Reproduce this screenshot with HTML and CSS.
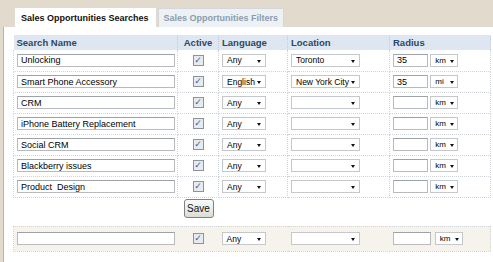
FILE: index.html
```html
<!DOCTYPE html>
<html lang="en">
  <head>
    <meta charset="UTF-8" />
    <title>Sales Opportunities</title>
    <link rel="stylesheet" href="styles.css">
  </head>
  <body>
    <div class="tabs">
      <div class="tab active">Sales Opportunities Searches</div>
      <div class="tab">Sales Opportunities Filters</div>
    </div>
    <div class="panel">
      <table class="searches">
        <colgroup>
          <col class="c-name" /><col class="c-active" /><col class="c-lang" /><col class="c-loc" /><col class="c-rad" />
        </colgroup>
        <thead>
          <tr>
            <th>Search Name</th>
            <th class="center">Active</th>
            <th>Language</th>
            <th>Location</th>
            <th>Radius</th>
          </tr>
        </thead>
        <tbody>
          <tr>
            <td><span class="field name">Unlocking</span></td>
            <td class="center"><span class="check">&#10003;</span></td>
            <td><span class="select lang"><span>Any</span><i class="arrow"></i></span></td>
            <td><span class="select loc"><span>Toronto</span><i class="arrow"></i></span></td>
            <td><span class="field rad">35</span> <span class="select unit"><span>km</span><i class="arrow"></i></span></td>
          </tr>
          <tr>
            <td><span class="field name">Smart Phone Accessory</span></td>
            <td class="center"><span class="check">&#10003;</span></td>
            <td><span class="select lang"><span>English</span><i class="arrow"></i></span></td>
            <td><span class="select loc"><span>New York City</span><i class="arrow"></i></span></td>
            <td><span class="field rad">35</span> <span class="select unit"><span>mi</span><i class="arrow"></i></span></td>
          </tr>
          <tr>
            <td><span class="field name">CRM</span></td>
            <td class="center"><span class="check">&#10003;</span></td>
            <td><span class="select lang"><span>Any</span><i class="arrow"></i></span></td>
            <td><span class="select loc"><span></span><i class="arrow"></i></span></td>
            <td><span class="field rad"></span> <span class="select unit"><span>km</span><i class="arrow"></i></span></td>
          </tr>
          <tr>
            <td><span class="field name">iPhone Battery Replacement</span></td>
            <td class="center"><span class="check">&#10003;</span></td>
            <td><span class="select lang"><span>Any</span><i class="arrow"></i></span></td>
            <td><span class="select loc"><span></span><i class="arrow"></i></span></td>
            <td><span class="field rad"></span> <span class="select unit"><span>km</span><i class="arrow"></i></span></td>
          </tr>
          <tr>
            <td><span class="field name">Social CRM</span></td>
            <td class="center"><span class="check">&#10003;</span></td>
            <td><span class="select lang"><span>Any</span><i class="arrow"></i></span></td>
            <td><span class="select loc"><span></span><i class="arrow"></i></span></td>
            <td><span class="field rad"></span> <span class="select unit"><span>km</span><i class="arrow"></i></span></td>
          </tr>
          <tr>
            <td><span class="field name">Blackberry issues</span></td>
            <td class="center"><span class="check">&#10003;</span></td>
            <td><span class="select lang"><span>Any</span><i class="arrow"></i></span></td>
            <td><span class="select loc"><span></span><i class="arrow"></i></span></td>
            <td><span class="field rad"></span> <span class="select unit"><span>km</span><i class="arrow"></i></span></td>
          </tr>
          <tr>
            <td><span class="field name">Product&nbsp; Design</span></td>
            <td class="center"><span class="check">&#10003;</span></td>
            <td><span class="select lang"><span>Any</span><i class="arrow"></i></span></td>
            <td><span class="select loc"><span></span><i class="arrow"></i></span></td>
            <td><span class="field rad"></span> <span class="select unit"><span>km</span><i class="arrow"></i></span></td>
          </tr>
          <tr class="save-row">
            <td></td>
            <td colspan="4"><button class="save">Save</button></td>
          </tr>
          <tr class="new-row">
            <td><span class="field name"></span></td>
            <td class="center"><span class="check">&#10003;</span></td>
            <td><span class="select lang"><span>Any</span><i class="arrow"></i></span></td>
            <td><span class="select loc"><span></span><i class="arrow"></i></span></td>
            <td><span class="field rad wide"></span> <span class="select unit"><span>km</span><i class="arrow"></i></span></td>
          </tr>
        </tbody>
      </table>
    </div>
  </body>
</html>
```

FILE: styles.css
```css
* {
  margin: 0;
  padding: 0;
  box-sizing: border-box;
}
body {
  background: #e1dacd;
  font-family: "Liberation Sans", Arial, sans-serif;
  height: 262px;
  overflow: hidden;
}
.tabs {
  display: flex;
  gap: 2px;
  padding: 8px 0 0 15px;
  height: 27px;
}
.tab {
  height: 19px;
  padding: 4px 5px 0 5px;
  font-size: 9px;
  font-weight: bold;
  color: #8a9bb0;
  background: #eef1f4;
  border: 1px solid #d3d6da;
  border-bottom: 0;
  white-space: nowrap;
}
.tab.active {
  height: 20px;
  padding-right: 6px;
  color: #111;
  background: #fff;
  border-color: #fff;
}
.panel {
  margin-left: 3px;
  height: 235px;
  background: #fff;
  border-left: 1px solid #b9b2a5;
  padding: 8px 0 0 9px;
}
.searches {
  width: 477px;
  border-collapse: collapse;
  table-layout: fixed;
}
.c-name { width: 164px; }
.c-active { width: 41px; }
.c-lang { width: 69px; }
.c-loc { width: 102px; }
.c-rad { width: 101px; }
.searches th {
  height: 15px;
  background: #dee7f1;
  color: #2c4866;
  font-size: 9.5px;
  text-align: left;
  padding: 0 3px;
  border-right: 1px dotted #c2cedb;
}
.searches td {
  height: 21px;
  padding: 0 3px;
  font-size: 8px;
  border: 1px dotted #cfd4da;
  border-top: 0;
  vertical-align: middle;
  white-space: nowrap;
}
.searches th.center,
.searches td.center {
  text-align: center;
}
.field,
.select {
  display: inline-flex;
  align-items: center;
  height: 13px;
  vertical-align: middle;
  font-size: 9px;
  color: #000;
  background: #fff;
  border: 1px solid #b7bbc0;
  border-top-color: #9da2a8;
  padding: 0 3px;
  overflow: hidden;
}
.field.name { width: 158px; }
.field.rad { width: 35px; }
.field.rad.wide { width: 38px; }
.select {
  justify-content: space-between;
  font-size: 8.5px;
  padding: 0 4px 0 4px;
  border-color: #c4c7cb;
}
.select.lang { width: 44px; }
.select.loc { width: 69px; }
.select.unit { width: 28px; padding: 0 3px 0 4px; font-size: 8px; }
.arrow {
  display: block;
  flex: none;
  width: 0;
  height: 0;
  border-left: 2.5px solid transparent;
  border-right: 2.5px solid transparent;
  border-top: 3px solid #111;
  margin-top: 2px;
}
.check {
  display: inline-block;
  width: 11px;
  height: 11px;
  border: 1px solid #8e9399;
  background: #e9eaec;
  color: #3a5fb0;
  font-family: "DejaVu Sans", sans-serif;
  font-size: 9px;
  line-height: 9px;
  text-align: center;
  vertical-align: middle;
  font-weight: bold;
}
.save-row td {
  height: 29px;
  border-left: 0;
  border-right: 0;
  vertical-align: top;
  padding: 1px 0 0 6px;
}
.save-row td:first-child {
  padding: 0;
}
.save {
  display: block;
  width: 30px;
  height: 19px;
  font-family: "Liberation Sans", Arial, sans-serif;
  font-size: 10px;
  color: #111;
  border: 1px solid #7f8184;
  border-radius: 3px;
  background: linear-gradient(#fbfbf9, #dcdcd7);
}
.new-row td {
  height: 25px;
  background: #f5f3ec;
  border-top: 1px dotted #cfd4da;
  border-left: 0;
  border-right: 0;
}
.new-row td:first-child {
  border-left: 1px dotted #cfd4da;
}
.new-row td:last-child {
  border-right: 1px dotted #cfd4da;
}
.new-row .unit {
  margin-left: 2px;
}
```
